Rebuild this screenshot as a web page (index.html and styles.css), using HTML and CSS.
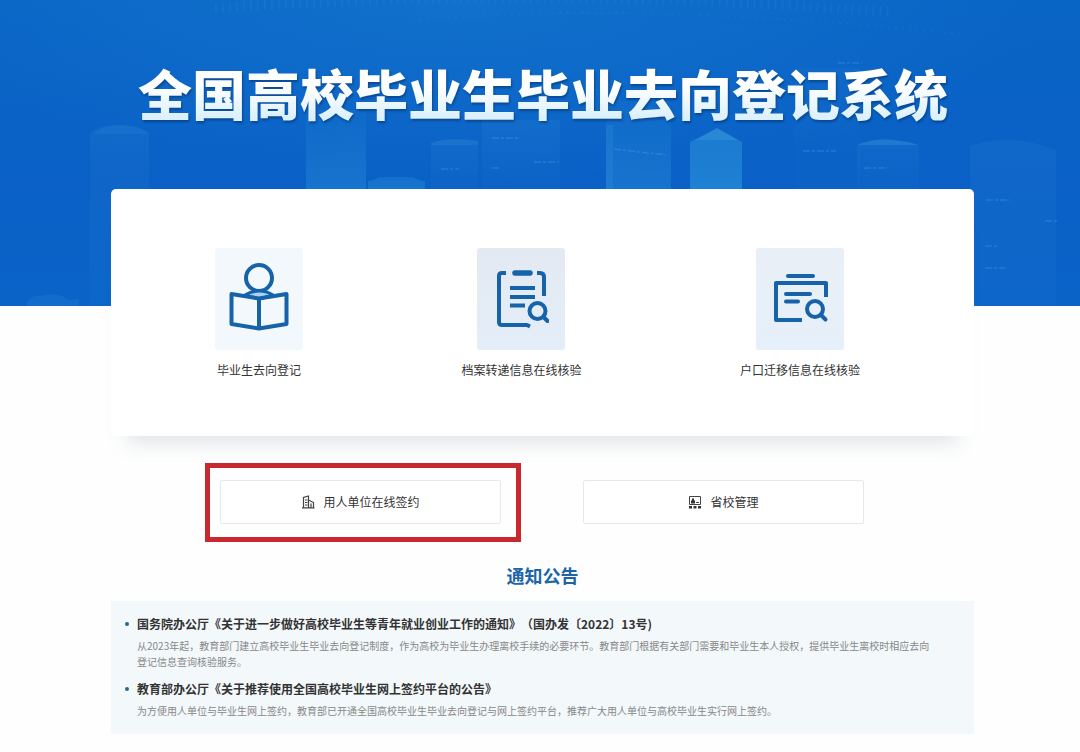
FILE: index.html
```html
<!DOCTYPE html>
<html lang="zh-CN">
<head>
<meta charset="utf-8">
<meta name="viewport" content="width=device-width, initial-scale=1">
<title>全国高校毕业生毕业去向登记系统</title>
<link rel="stylesheet" href="styles.css">
</head>
<body>
<header class="hero">
  <svg class="skyline" viewBox="0 0 1080 306" preserveAspectRatio="xMidYMax slice" aria-hidden="true">
    <defs>
      <linearGradient id="tower" x1="0" y1="0" x2="0" y2="1">
        <stop offset="0" stop-color="#3fb4e6" stop-opacity=".04"/>
        <stop offset="1" stop-color="#3fb4e6" stop-opacity=".24"/>
      </linearGradient>
      <linearGradient id="bright" x1="0" y1="0" x2="0" y2="1">
        <stop offset="0" stop-color="#3fb4e6" stop-opacity=".28"/>
        <stop offset="1" stop-color="#3fb4e6" stop-opacity=".4"/>
      </linearGradient>
      <linearGradient id="faint" x1="0" y1="0" x2="0" y2="1">
        <stop offset="0" stop-color="#5cb8ee" stop-opacity=".08"/>
        <stop offset="1" stop-color="#5cb8ee" stop-opacity=".03"/>
      </linearGradient>
    </defs>
    <path fill="url(#faint)" d="M90 134q4-8 28-9 25 1 31 9v172H90z"/>
    <path fill="#62bdec" opacity=".08" d="M94 134q4-8 26-9 23 1 29 9z"/>
    <path fill="#62bdec" opacity=".1" d="M27 306v-4q8-8 12-6 12-3 24 0l4 4 12-1v7z"/>
    <path fill="url(#tower)" d="M306 110h60v79h-60z"/>
    <path fill="url(#bright)" opacity=".65" d="M368 189v-8q5 0 11-4h34q6 4 12 4v8z"/>
    <path fill="url(#faint)" d="M431 143q20-7 47-2v48h-47z"/>
    <path fill="#62bdec" opacity=".1" d="M431 143q20-7 47-2v4h-47z"/>
    <path fill="url(#faint)" d="M482 120h78v69h-78z"/>
    <path fill="url(#tower)" d="M606 100h65v89h-65z"/>
    <path fill="#4fbdf0" opacity=".12" d="M606 125h7v64h-7z"/>
    <path fill="url(#bright)" d="M690 189v-47l6-3 21-11 20 11 5 3v47z"/>
    <path fill="#8fd2f5" opacity=".14" d="M696 140l21-12 20 12z"/>
    <path fill="url(#faint)" opacity=".5" d="M795 68h65v121h-65z"/>
    <path fill="url(#faint)" d="M857 145q25-11 62 0v44h-62z"/>
    <path fill="#62bdec" opacity=".2" d="M857 145q25-11 62 0z"/>
    <path fill="url(#faint)" d="M970 146q40-14 86 4v156h-86z"/>
    <g stroke="#7acbf4" stroke-opacity=".2" stroke-width="1.5" stroke-dasharray="7 2 3 2">
      <path d="M492 138h26M492 168h8M534 162h25M441 169h18M614 149l52 6M803 151h33M864 168h24M838 63h24M986 200h24M1045 221h12M985 246h12M985 268h20"/>
    </g>
    <g fill="none" stroke="#3da6e4" stroke-opacity=".12" stroke-dasharray="2 5">
      <path stroke-width="10" d="M215 8Q540-14 890 12"/>
      <path stroke-width="2" d="M420 20q200-18 500 10l42 4"/>
    </g>
  </svg>
  <h1 class="hero-title">全国高校毕业生毕业去向登记系统</h1>
</header>

<main class="page">
  <nav class="services" aria-label="在线服务">
    <a class="service" href="#">
      <span class="tile tile-light">
        <svg width="64" height="74" viewBox="0 0 64 74" fill="none" stroke="#1763a9" stroke-width="4" stroke-linejoin="round" aria-hidden="true">
          <circle cx="32" cy="16" r="13"/>
          <path fill="#a9d3f2" stroke-width="3" d="M18 33q6-4 14-4t14 4l-14 4z"/>
          <path d="M4.500 32 32 36.500 59.500 32v30L32 66.500 4.500 62zM32 37v29"/>
        </svg>
      </span>
      <span class="service-name">毕业生去向登记</span>
    </a>
    <a class="service" href="#">
      <span class="tile tile-deep">
        <svg width="56" height="64" viewBox="0 0 56 64" fill="none" stroke="#1763a9" stroke-width="4" stroke-linecap="butt" stroke-linejoin="round" aria-hidden="true">
          <path d="M13 6H9Q6 6 6 9v46q0 3 3 3h25l3 1.500M44 6h3q4 0 4 4v19"/>
          <path stroke-width="5.500" stroke-linecap="round" d="M22 6h15"/>
          <path d="M17 21h25M17 30h25M17 38.500h15"/>
          <circle cx="44.500" cy="44" r="8"/>
          <path stroke-linecap="round" d="m50.500 50 4 4"/>
        </svg>
      </span>
      <span class="service-name">档案转递信息在线核验</span>
    </a>
    <a class="service" href="#">
      <span class="tile tile-mid">
        <svg width="58" height="56" viewBox="0 0 58 56" fill="none" stroke="#1763a9" stroke-width="4" stroke-linejoin="round" aria-hidden="true">
          <path stroke-linecap="round" d="M17 5h25"/>
          <path d="M31 49H5V12h50v14"/>
          <path stroke-linecap="round" d="M15 23h24M15 30.500h12"/>
          <circle cx="44" cy="38" r="8"/>
          <path stroke-linecap="round" d="m50 44 4.500 4.500"/>
        </svg>
      </span>
      <span class="service-name">户口迁移信息在线核验</span>
    </a>
  </nav>

  <div class="entries">
    <div class="entry marked">
      <button class="entry-button" type="button">
        <svg width="14" height="14" viewBox="0 0 14 14" fill="none" stroke="#444" aria-hidden="true">
          <path stroke-width="1.200" d="M2.500 12.500v-10l5-1.500v11.500M7.500 5l5 2.500v5M1 12.800h12.500M4 5h2.500M4 7.500h2.500M4 10h2.500M10 8.500v4"/>
        </svg>
        <span>用人单位在线签约</span>
      </button>
    </div>
    <div class="entry">
      <button class="entry-button" type="button">
        <svg width="14" height="14" viewBox="0 0 14 14" fill="none" stroke="#444" aria-hidden="true">
          <path d="M1.500 9.500v-8h11v8h-11M8 7.500h3"/>
          <path fill="#333" stroke="none" d="M4 3.500h2v2h1v3H3v-3h1zM1 11h3v2.500H1zM5.500 11h3v2.500h-3zM10 11h3v2.500h-3z"/>
        </svg>
        <span>省校管理</span>
      </button>
    </div>
  </div>

  <section class="news" aria-labelledby="news-title">
    <h2 class="news-title" id="news-title">通知公告</h2>
    <ul class="news-list">
      <li class="news-item">
        <h3 class="news-heading">国务院办公厅《关于进一步做好高校毕业生等青年就业创业工作的通知》（国办发〔2022〕13号)</h3>
        <p class="news-text">从2023年起，教育部门建立高校毕业生毕业去向登记制度，作为高校为毕业生办理离校手续的必要环节。教育部门根据有关部门需要和毕业生本人授权，提供毕业生离校时相应去向登记信息查询核验服务。</p>
      </li>
      <li class="news-item">
        <h3 class="news-heading">教育部办公厅《关于推荐使用全国高校毕业生网上签约平台的公告》</h3>
        <p class="news-text">为方便用人单位与毕业生网上签约，教育部已开通全国高校毕业生毕业去向登记与网上签约平台，推荐广大用人单位与高校毕业生实行网上签约。</p>
      </li>
    </ul>
  </section>
</main>
</body>
</html>
```
FILE: styles.css
```css
* {
  box-sizing: border-box;
}

body {
  margin: 0;
  background: #fefefe;
  color: #333;
  font-family: "Noto Sans CJK SC", "Noto Sans", sans-serif;
  font-size: 12px;
  line-height: 20px;
  text-spacing-trim: space-all;
}

h1, h2, h3, p, ul {
  margin: 0;
  padding: 0;
}

.hero {
  position: relative;
  padding: 53px 0 173px;
  overflow: hidden;
  background:
    radial-gradient(ellipse 55% 60% at 42% 0, rgba(30, 130, 215, .4), transparent),
    linear-gradient(#0965c5, #0a60c6 60%, #0a64c8);
}

.skyline {
  position: absolute;
  inset: 0;
  width: 100%;
  height: 100%;
}

.hero-title {
  position: relative;
  padding-left: 6px;
  text-align: center;
  font-size: 54px;
  font-weight: 900;
  line-height: 80px;
  color: transparent;
  background: linear-gradient(#fff 40%, #dcf1fc 80%);
  background-clip: text;
  -webkit-background-clip: text;
  filter: drop-shadow(1px 2px 1px rgba(5, 50, 110, .6));
}

.page {
  padding: 0 106px 18px 111px;
}

.services {
  position: relative;
  display: flex;
  justify-content: space-between;
  margin-top: -117px;
  padding: 59px 114px 56px 104px;
  background: #fff;
  border-radius: 5px;
  box-shadow: 0 22px 20px -16px rgba(90, 120, 140, .2);
}

.service {
  display: flex;
  flex-direction: column;
  align-items: center;
  gap: 10px;
  color: #333;
  text-decoration: none;
}

.tile {
  display: flex;
  align-items: center;
  justify-content: center;
  width: 88px;
  height: 102px;
  border-radius: 3px;
}

.tile-light {
  background: #f3f8fd;
}

.tile-deep {
  background: linear-gradient(#e3e9f3, #e4eef8);
}

.tile-mid {
  background: linear-gradient(#e9eff6, #e6f0fa);
}

.entries {
  display: grid;
  grid-template-columns: 1fr 1fr;
  gap: 82px;
  padding: 44px 110px 0 109px;
}

.entry {
  position: relative;
}

.marked::after {
  content: "";
  position: absolute;
  inset: -17px -20px -18px -15px;
  border: 5px solid #c9282e;
  pointer-events: none;
}

.entry-button {
  display: flex;
  align-items: center;
  justify-content: center;
  gap: 8px;
  width: 100%;
  height: 44px;
  border: 1px solid #e6e8ea;
  border-radius: 2px;
  background: #fff;
  color: #333;
  font: inherit;
}

.news-title {
  padding: 37px 0 12px;
  text-align: center;
  font-size: 18px;
  font-weight: 700;
  line-height: 28px;
  color: #1c65a6;
}

.news-list {
  display: grid;
  gap: 9px;
  padding: 13px 36px 15px 26px;
  background: #f3f8fb;
  list-style: none;
}

.news-heading {
  position: relative;
  font-size: 12px;
  font-weight: 700;
  line-height: 20px;
}

.news-heading::before {
  content: "";
  position: absolute;
  top: 8px;
  left: -12px;
  width: 4px;
  height: 4px;
  border-radius: 50%;
  background: #2b6a8c;
}

.news-text {
  margin-top: 4px;
  font-size: 10px;
  line-height: 16px;
  color: #888;
}
```
